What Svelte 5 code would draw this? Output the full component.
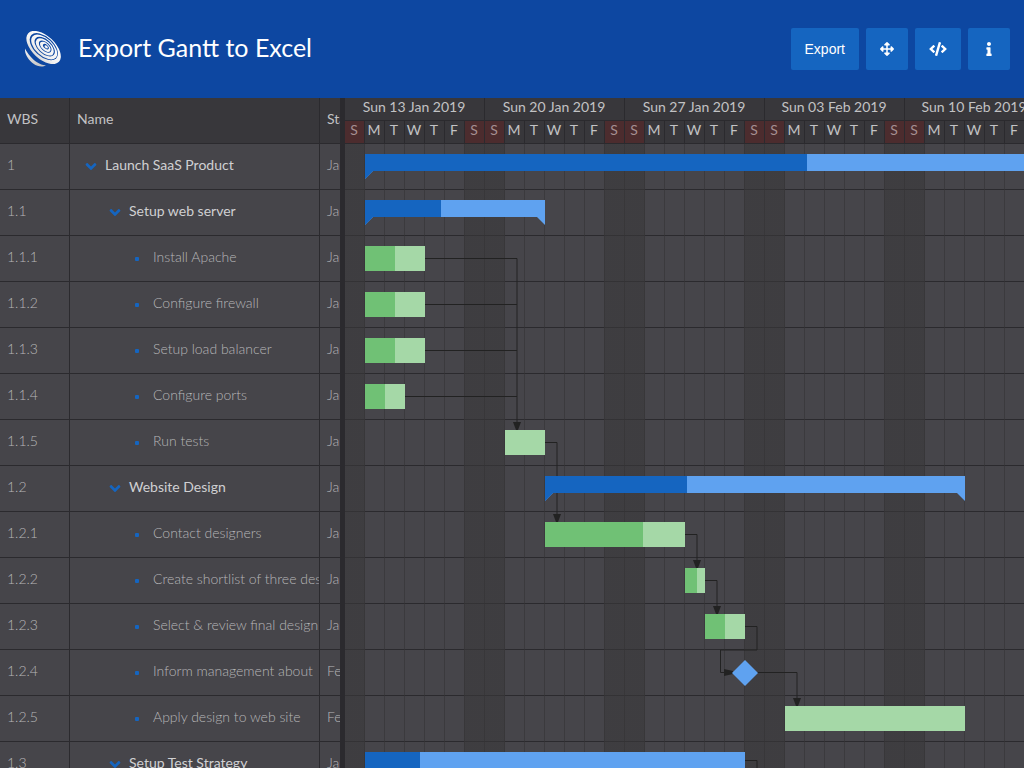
<script>
  const DAY = 20;
  const WEEKS = ['Sun 13 Jan 2019', 'Sun 20 Jan 2019', 'Sun 27 Jan 2019', 'Sun 03 Feb 2019', 'Sun 10 Feb 2019', 'Sun 17 Feb 2019', 'Sun 24 Feb 2019', 'Sun 03 Mar 2019', 'Sun 10 Mar 2019', 'Sun 17 Mar 2019'];
  const DAYS = ['S', 'M', 'T', 'W', 'T', 'F', 'S'];

  // start and days count from the first visible day; done is the finished share in percent
  const tasks = [
    { wbs: '1', name: 'Launch SaaS Product', level: 0, parent: true, date: 'Jan 14, 2019', start: 1, days: 52, done: 42.5 },
    { wbs: '1.1', name: 'Setup web server', level: 1, parent: true, date: 'Jan 14, 2019', start: 1, days: 9, done: 42.3 },
    { wbs: '1.1.1', name: 'Install Apache', level: 2, date: 'Jan 14, 2019', start: 1, days: 3, done: 50 },
    { wbs: '1.1.2', name: 'Configure firewall', level: 2, date: 'Jan 14, 2019', start: 1, days: 3, done: 50 },
    { wbs: '1.1.3', name: 'Setup load balancer', level: 2, date: 'Jan 14, 2019', start: 1, days: 3, done: 50 },
    { wbs: '1.1.4', name: 'Configure ports', level: 2, date: 'Jan 14, 2019', start: 1, days: 2, done: 50 },
    { wbs: '1.1.5', name: 'Run tests', level: 2, date: 'Jan 21, 2019', start: 8, days: 2, done: 0 },
    { wbs: '1.2', name: 'Website Design', level: 1, parent: true, date: 'Jan 23, 2019', start: 10, days: 21, done: 33.8 },
    { wbs: '1.2.1', name: 'Contact designers', level: 2, date: 'Jan 23, 2019', start: 10, days: 7, done: 70 },
    { wbs: '1.2.2', name: 'Create shortlist of three designers', level: 2, date: 'Jan 30, 2019', start: 17, days: 1, done: 60 },
    { wbs: '1.2.3', name: 'Select & review final design', level: 2, date: 'Jan 31, 2019', start: 18, days: 2, done: 50 },
    { wbs: '1.2.4', name: 'Inform management about', level: 2, date: 'Feb 2, 2019', start: 20, days: 0, done: 0 },
    { wbs: '1.2.5', name: 'Apply design to web site', level: 2, date: 'Feb 4, 2019', start: 22, days: 9, done: 0 },
    { wbs: '1.3', name: 'Setup Test Strategy', level: 1, parent: true, date: 'Jan 14, 2019', start: 1, days: 19, done: 14.5 }
  ];

  const links = [
    'M80 114.5H172V280', 'M80 160.5H172', 'M80 206.5H172', 'M60 252.5H172',
    'M200 298.5H212V372', 'M340 390.5H352V418', 'M360 436.5H372V464',
    'M400 482.5H412V506H375.5V528.5H382', 'M412 528.5H452V556', 'M400 616.5H412V670'
  ];
  const arrows = ['M168 278h8l-3 8h-2z', 'M208 370h8l-3 8h-2z', 'M348 416h8l-3 8h-2z', 'M368 462h8l-3 8h-2z', 'M379 525v7l9-2v-3z', 'M448 554h8l-3 8h-2z'];
</script>

<div class="page">
  <header>
    <svg class="logo" viewBox="0 0 36 36" aria-hidden="true">
      <defs>
        <linearGradient id="silver" gradientUnits="userSpaceOnUse" x1="0" y1="4" x2="0" y2="36">
          <stop offset="0" stop-color="#fff" />
          <stop offset=".5" stop-color="#f2f2f2" />
          <stop offset="1" stop-color="#c4c4c4" />
        </linearGradient>
      </defs>
      <path class="metal" d="M0 17.500C2.500 22.500 7 28 12 31.300C15.500 33.500 18.500 34.500 21 34.200C18 36.300 12.500 35.700 8.500 32.800C3.500 29 -.5 23.500 0 17.500z" />
      <ellipse class="metal" cx="18.600" cy="16.500" rx="21" ry="11.500" transform="rotate(43 18.600 16.500)" />
      <ellipse class="gap" cx="18.800" cy="15.600" rx="17" ry="9.700" transform="rotate(43 18.800 15.600)" />
      <ellipse class="metal" cx="19.200" cy="16" rx="15.800" ry="8.700" transform="rotate(43 19.200 16)" />
      <ellipse class="gap" cx="19.700" cy="15.600" rx="12.300" ry="6.900" transform="rotate(43 19.700 15.600)" />
      <ellipse class="metal" cx="19.800" cy="15.900" rx="11" ry="6" transform="rotate(43 19.800 15.900)" />
      <ellipse class="gap" cx="20.200" cy="15.600" rx="7.700" ry="4.300" transform="rotate(43 20.200 15.600)" />
      <ellipse class="metal" cx="20.300" cy="15.800" rx="6.500" ry="3.500" transform="rotate(43 20.300 15.800)" />
      <ellipse class="gap" cx="20.900" cy="15.600" rx="3.500" ry="2" transform="rotate(43 20.900 15.600)" />
      <ellipse class="metal" cx="21.200" cy="15.900" rx="2" ry="1.200" transform="rotate(43 21.200 15.900)" />
    </svg>
    <h1>Export Gantt to Excel</h1>
    <div class="tools">
      <button type="button">Export</button>
      <button type="button" aria-label="Full screen">
        <svg class="icon" viewBox="0 0 512 512"><path d="M352.201 425.775l-79.196 79.196c-9.373 9.373-24.568 9.373-33.941 0l-79.196-79.196c-15.119-15.119-4.411-40.971 16.971-40.970h51.162L228 284H127.196v51.162c0 21.382-25.851 32.090-40.971 16.971L7.029 272.937c-9.373-9.373-9.373-24.569 0-33.941L86.225 159.800c15.119-15.119 40.971-4.411 40.971 16.971V228H228V127.196h-51.230c-21.382 0-32.090-25.851-16.971-40.971l79.196-79.196c9.373-9.373 24.568-9.373 33.941 0l79.196 79.196c15.119 15.119 4.411 40.971-16.971 40.971h-51.162V228h100.804v-51.162c0-21.382 25.851-32.090 40.970-16.971l79.196 79.196c9.373 9.373 9.373 24.569 0 33.941L425.773 352.200c-15.119 15.119-40.971 4.411-40.970-16.971V284H284v100.804h51.230c21.382 0 32.090 25.851 16.971 40.971z" /></svg>
      </button>
      <button type="button" aria-label="Show code">
        <svg class="icon wide" viewBox="0 0 640 512"><path d="M278.900 511.500l-61-17.700c-6.400-1.800-10-8.500-8.200-14.900L346.200 8.700c1.800-6.400 8.500-10 14.900-8.200l61 17.700c6.400 1.800 10 8.500 8.200 14.900L293.800 503.300c-1.900 6.400-8.500 10.100-14.900 8.200zm-114-112.200l43.500-46.400c4.600-4.900 4.300-12.700-.8-17.200L117 256l90.600-79.700c5.100-4.500 5.500-12.300.8-17.200l-43.500-46.400c-4.500-4.800-12.100-5.100-17-.5L3.800 247.200c-5.100 4.700-5.100 12.800 0 17.500l144.100 135.100c4.900 4.600 12.500 4.400 17-.5zm327.200.6l144.100-135.100c5.100-4.700 5.100-12.800 0-17.500L492.100 112.100c-4.800-4.500-12.400-4.300-17 .5L431.600 159c-4.600 4.900-4.300 12.700.8 17.200L523 256l-90.600 79.700c-5.100 4.500-5.500 12.300-.8 17.200l43.500 46.400c4.500 4.900 12.100 5.100 17 .6z" /></svg>
      </button>
      <button type="button" aria-label="Information">
        <svg class="icon" viewBox="0 0 192 512"><path d="M20 424.229h20V279.771H20c-11.046 0-20-8.954-20-20V212c0-11.046 8.954-20 20-20h112c11.046 0 20 8.954 20 20v212.229h20c11.046 0 20 8.954 20 20V492c0 11.046-8.954 20-20 20H20c-11.046 0-20-8.954-20-20v-47.771c0-11.046 8.954-20 20-20zM96 0C56.235 0 24 32.235 24 72s32.235 72 72 72 72-32.235 72-72S135.764 0 96 0z" /></svg>
      </button>
    </div>
  </header>

  <main>
    <section class="grid" aria-label="Tasks">
      <table>
        <colgroup><col class="c-wbs" /><col class="c-name" /><col class="c-start" /></colgroup>
        <thead>
          <tr><th scope="col">WBS</th><th scope="col">Name</th><th scope="col">Start</th></tr>
        </thead>
        <tbody>
          {#each tasks as task}
            <tr>
              <td>{task.wbs}</td>
              <td class:parent={task.parent}>
                <div class="tree level{task.level}">
                  {#if task.parent}
                    <button type="button" class="expander" aria-label="Collapse {task.name}" aria-expanded="true">
                      <svg viewBox="0 152 320 208"><path d="M143 352.300L7 216.300c-9.400-9.400-9.400-24.600 0-33.900l22.600-22.600c9.400-9.400 24.600-9.400 33.900 0l96.400 96.400 96.400-96.400c9.400-9.400 24.600-9.400 33.900 0l22.600 22.600c9.400 9.400 9.400 24.600 0 33.900l-136 136c-9.200 9.400-24.400 9.400-33.800 0z" /></svg>
                    </button>
                  {:else}
                    <span class="dot"></span>
                  {/if}
                  <span class="label">{task.name}</span>
                </div>
              </td>
              <td>{task.date}</td>
            </tr>
          {/each}
        </tbody>
      </table>
    </section>

    <div class="splitter"></div>

    <section class="timeline" aria-label="Schedule">
      <div class="axis">
        {#each WEEKS as week}
          <div class="week">
            <div class="week-name">{week}</div>
            <div class="days">
              {#each DAYS as day, i}
                <span class:weekend={i === 0 || i === 6}>{day}</span>
              {/each}
            </div>
          </div>
        {/each}
      </div>

      <div class="canvas">
        <svg class="links" aria-hidden="true">
          {#each links as d}<path class="line" {d} />{/each}
          {#each arrows as d}<path class="arrow" {d} />{/each}
        </svg>
        {#each tasks as task}
          <div class="lane">
            {#if task.days === 0}
              <svg class="milestone" viewBox="0 0 26 26" style:left="{task.start * DAY}px"><path d="M13 0L26 13L13 26L0 13z" /></svg>
            {:else}
              <div class="bar" class:summary={task.parent} style:left="{task.start * DAY}px" style:width="{task.days * DAY}px">
                <div class="done" style:width="{task.done}%"></div>
              </div>
            {/if}
          </div>
        {/each}
      </div>
    </section>
  </main>
</div>

<style>
  :global(body) {
    margin: 0;
  }

  .page {
    display: flex;
    flex-direction: column;
    height: 100vh;
    overflow: hidden;
    background: #46454a;
    color: #b6b6b8;
    font: 300 14px/20px Lato, sans-serif;
  }

  header {
    display: flex;
    flex: none;
    align-items: center;
    padding: 28px 14px 28px 25px;
    background: #0d47a1;
  }

  .logo {
    width: 36px;
    height: 36px;
  }

  .metal {
    fill: url(#silver);
  }

  .gap {
    fill: #0d47a1;
  }

  h1 {
    flex: 1;
    margin: 0 0 0 17px;
    padding-bottom: 5px;
    color: #fff;
    font-size: 25px;
    font-weight: 400;
    line-height: 30px;
  }

  .tools {
    display: flex;
    gap: 7px;
  }

  .tools button {
    display: flex;
    align-items: center;
    height: 42px;
    padding: 0 14px;
    border: 0;
    border-radius: 2px;
    background: #1565c0;
    color: #fff;
    font: 14px "Liberation Sans", sans-serif;
  }

  .icon {
    width: 14px;
    height: 14px;
    fill: #fff;
  }

  .icon.wide {
    width: 18px;
  }

  main {
    display: flex;
    flex: 1;
    min-height: 0;
  }

  .grid {
    flex: none;
    width: 340px;
    overflow: hidden;
  }

  table {
    width: 420px;
    border-collapse: separate;
    border-spacing: 0;
    table-layout: fixed;
  }

  .c-wbs {
    width: 70px;
  }

  .c-name {
    width: 250px;
  }

  .c-start {
    width: 100px;
  }

  th,
  td {
    box-sizing: border-box;
    height: 46px;
    padding: 0 0 3px 7px;
    border-right: 1px solid #2b2a2e;
    border-bottom: 1px solid #2b2a2e;
    overflow: hidden;
    text-align: left;
    white-space: nowrap;
  }

  th {
    background: #38373b;
    color: #c2c2c4;
    font-weight: 400;
  }

  .parent {
    color: #d0d0d2;
    font-weight: 400;
  }

  .tree {
    display: flex;
    align-items: center;
    padding-left: 8px;
  }

  .level1 {
    padding-left: 32px;
  }

  .level2 {
    padding-left: 56px;
  }

  .expander {
    flex: none;
    width: 12px;
    height: 20px;
    margin-right: 8px;
    padding: 2px 0 0;
    border: 0;
    background: none;
  }

  .expander svg {
    display: block;
    width: 12px;
    height: 7px;
    fill: #1565c0;
  }

  .dot {
    flex: none;
    width: 4px;
    height: 4px;
    margin: 4px 14px 0 2px;
    border-radius: 1px;
    background: #1565c0;
  }

  .splitter {
    flex: none;
    width: 5px;
    background: #2b2a2e;
  }

  .timeline {
    flex: 1;
    min-width: 0;
    overflow: hidden;
  }

  .axis {
    display: flex;
    background: #38373b;
    color: #c2c2c4;
    font-weight: 400;
    line-height: 18px;
  }

  .week {
    flex: none;
    width: 140px;
  }

  .week-name {
    box-sizing: border-box;
    height: 23px;
    padding-right: 1px;
    border-right: 1px solid #2b2a2e;
    border-bottom: 1px solid #2b2a2e;
    text-align: center;
  }

  .days {
    display: flex;
  }

  .days span {
    box-sizing: border-box;
    width: 20px;
    height: 23px;
    padding-right: 1px;
    border-right: 1px solid #2b2a2e;
    border-bottom: 1px solid #2b2a2e;
    text-align: center;
  }

  .days .weekend {
    background: #4c2c2e;
    color: #a58f91;
  }

  .canvas {
    position: relative;
    background: repeating-linear-gradient(#46454a 0 45px, #2b2a2e 45px 46px);
  }

  /* Day lines and weekend shading lie over the row lines. */
  .canvas::before {
    position: absolute;
    inset: 0;
    background:
      repeating-linear-gradient(90deg, transparent 0 19px, rgb(52 51 53 / 0.6) 19px 20px),
      repeating-linear-gradient(90deg, rgb(57 56 58 / 0.6) 0 20px, transparent 20px 119px, rgb(57 56 58 / 0.6) 119px 140px);
    content: "";
  }

  .links {
    position: absolute;
    inset: 0;
    width: 100%;
    height: 100%;
  }

  .line {
    fill: none;
    stroke: #222;
  }

  .arrow {
    fill: #222;
  }

  .lane {
    position: relative;
    height: 46px;
  }

  .bar {
    position: absolute;
    top: 10px;
    height: 25px;
    background: #a5d8a7;
  }

  .done {
    height: 100%;
    background: #70c175;
  }

  .summary {
    background: #5fa2f0;
    clip-path: polygon(0 0, 100% 0, 100% 100%, calc(100% - 8px) 17px, 8px 17px, 0 100%);
  }

  .summary .done {
    background: #1565c0;
  }

  .milestone {
    position: absolute;
    top: 10px;
    width: 26px;
    height: 26px;
    margin-left: -13px;
    fill: #5fa2f0;
  }
</style>
